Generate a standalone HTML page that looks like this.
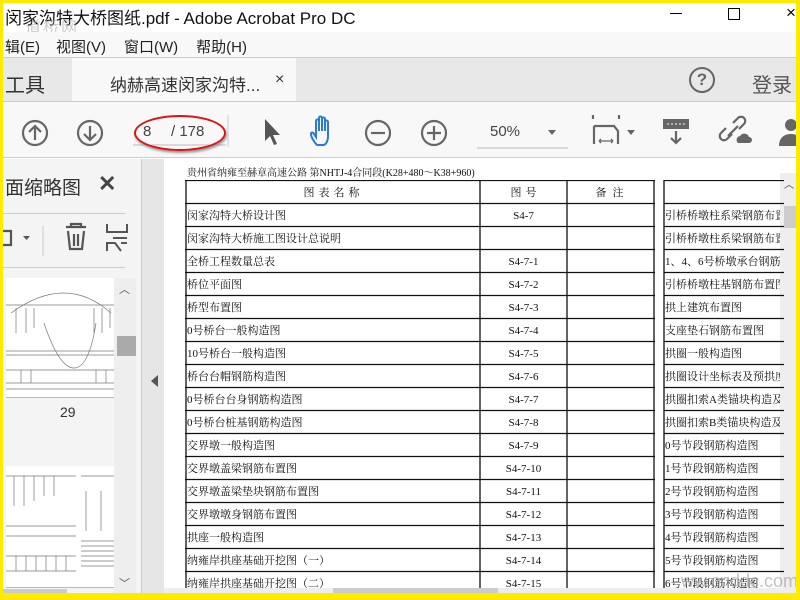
<!DOCTYPE html>
<html><head><meta charset="utf-8"><style>
*{margin:0;padding:0;box-sizing:border-box}
body{width:800px;height:600px;overflow:hidden;background:#ffeb00;position:relative;font-family:"Liberation Sans","Noto Sans CJK SC",sans-serif;color:#333}
.a{position:absolute}
.t{font-size:11px;font-family:"Liberation Serif","Noto Serif CJK SC",serif;color:#111}
</style></head><body>
<div class="a" style="left:3px;top:3px;width:793px;height:590px;background:#fff;overflow:hidden">
<div class="a" style="left:-3px;top:0;width:800px;height:29px;background:#fff"></div>
<div class="a" style="left:2px;top:1px;font-size:17px;color:#111;white-space:nowrap">闵家沟特大桥图纸.pdf - Adobe Acrobat Pro DC</div>
<div class="a" style="left:22px;top:11px;font-size:16px;color:#aaa;opacity:.6;letter-spacing:2px">道桥网</div>
<div class="a" style="left:667px;top:10px;width:12px;height:1px;background:#000"></div>
<div class="a" style="left:725px;top:5px;width:12px;height:12px;border:1px solid #000"></div>
<div class="a" style="left:783px;top:0px;font-size:17px;color:#000">×</div>
<div class="a" style="left:0;top:29px;width:793px;height:25px;background:#f8f8f8"></div>
<div class="a" style="left:2px;top:33px;font-size:15px;color:#222;white-space:nowrap">辑(E)<span style="margin-left:16px">视图(V)</span><span style="margin-left:18px">窗口(W)</span><span style="margin-left:18px">帮助(H)</span></div>
<div class="a" style="left:0;top:54px;width:793px;height:44px;background:#e8e8e8;border-top:1px solid #ccc"></div>
<div class="a" style="left:69px;top:55px;width:224px;height:44px;background:#f8f8f8"></div>
<div class="a" style="left:2px;top:66px;font-size:20px;color:#333">工具</div>
<div class="a" style="left:107px;top:68px;font-size:17px;color:#333">纳赫高速闵家沟特...</div>
<div class="a" style="left:272px;top:68px;font-size:16px;color:#333">×</div>
<div class="a" style="left:686px;top:64px;width:26px;height:26px;border:2px solid #666;border-radius:50%;text-align:center;font-size:17px;line-height:22px;color:#666;font-weight:bold">?</div>
<div class="a" style="left:749px;top:66px;font-size:20px;color:#555">登录</div>
<div class="a" style="left:0;top:98px;width:793px;height:57px;background:#f8f8f8;border-top:1px solid #ccc;border-bottom:1px solid #ccc"></div>
<svg class="a" style="left:0;top:98px" width="793" height="57" viewBox="0 0 793 57">
<g fill="none" stroke="#666" stroke-width="2.2">
<circle cx="32" cy="32" r="12"/><path d="M32 39V25M26 31l6-6 6 6"/>
<circle cx="87" cy="32" r="12"/><path d="M87 25v14M81 33l6 6 6-6"/>
<circle cx="375" cy="32" r="12"/><path d="M368 32h14"/>
<circle cx="431" cy="32" r="12"/><path d="M424 32h14M431 25v14"/>
<path d="M590 18v-4M616 18v-4M591 25h20l4 5v13M591 25v18" /><path d="M596 40h14M596 40l2-2M596 40l2 2M610 40l-2-2M610 40l-2 2" stroke-width="1.3"/>
<path d="M723 27l-5 5a4 4 0 0 0 6 6l5-5M730 22l5-5a4 4 0 0 1 6 6l-5 5M725 35l10-10"/>
</g>
<path d="M262 18v22l5-5 4 9 3-1-4-9h7z" fill="#555"/>
<path d="M314 44c-3-3-6-8-6-11 0-2 2-2 3 0l2 3V20c0-2 3-2 3 0v10V17c0-2 3-2 3 0v13V18c0-2 3-2 3 0v12V21c0-2 3-2 3 0v14c0 5-2 9-5 9z" fill="none" stroke="#2a7ad6" stroke-width="2"/>
<path d="M545 29h8l-4 5z M624 29h8l-4 5z" fill="#666"/>
<rect x="660" y="18" width="26" height="10" fill="#666"/><path d="M664 23h18" stroke="#fff" stroke-dasharray="2 2"/><path d="M673 30v12M668 37l5 5 5-5" fill="none" stroke="#666" stroke-width="2.2"/>
<path d="M735 42a4 4 0 0 1 2-7 5 5 0 0 1 9 1 3 3 0 0 1 0 6z" fill="#666"/>
<circle cx="788" cy="24" r="6" fill="#666"/><path d="M776 45c0-8 5-12 12-12s10 4 10 12z" fill="#666"/>
<path d="M225 14v32" stroke="#ccc"/>
<path d="M130 44h93M474 47h91" stroke="#bbb"/>
</svg>
<div class="a" style="left:140px;top:120px;font-size:15px;color:#444">8</div>
<div class="a" style="left:168px;top:120px;font-size:15px;color:#444">/ 178</div>
<div class="a" style="left:131px;top:112px;width:92px;height:36px;border:2px solid #d11;border-radius:50%;box-shadow:1px 2px 2px #999"></div>
<div class="a" style="left:487px;top:120px;font-size:15px;color:#444">50%</div>
<div class="a" style="left:0;top:156px;width:138px;height:437px;background:#f4f4f4"></div>
<div class="a" style="left:2px;top:170px;font-size:19px;color:#333">面缩略图</div>
<div class="a" style="left:95px;top:168px;font-size:22px;color:#444;font-weight:bold">✕</div>
<div class="a" style="left:0;top:210px;width:122px;height:1px;background:#ccc"></div>
<div class="a" style="left:0;top:264px;width:122px;height:1px;background:#ccc"></div>
<svg class="a" style="left:0;top:218px" width="130" height="40"><g fill="none" stroke="#555" stroke-width="2.2"><path d="M0 10h8v14H0"/><path d="M63 6h20M68 6V3h10v3M65 10l2 18h12l2-18M71 13v12M75 13v12"/><path d="M104 3v8h20v-8M104 30v-8h8l6 8M118 22h6M110 17h14" stroke-width="2"/></g><path d="M20 15h7l-3.5 4z" fill="#555"/><path d="M40 5v30" stroke="#ccc"/></svg>
<div class="a" style="left:3px;top:275px;width:110px;height:120px;background:#fff;border-bottom:1px solid #bbb"></div>
<svg class="a" style="left:3px;top:275px" width="110" height="120"><g fill="none" stroke="#777" stroke-width=".7"><path d="M5 35q55-40 100 0"/><path d="M38 45q15 45 30 45 15 0 22-45"/><path d="M0 27h110M0 73h110M0 77h110M0 92h110M0 105h110M0 111h110"/><path d="M10 30v25M20 30v25M28 30v20M88 30v25M96 30v25M104 30v20M15 92v13M25 92v13M90 92v13M100 92v13"/></g></svg>
<div class="a" style="left:57px;top:401px;font-size:14px;color:#333">29</div>
<div class="a" style="left:3px;top:463px;width:110px;height:122px;background:#fff;border-bottom:1px solid #bbb"></div>
<svg class="a" style="left:3px;top:463px" width="110" height="122"><g fill="none" stroke="#777" stroke-width=".7"><path d="M0 10h70M0 60h70M0 70h70M0 90h70M0 105h70M75 10h35M80 25v40M95 25v40M75 75h35M75 80h35M75 85h35M75 90h35M75 95h35M75 100h35"/><path d="M8 10v30M18 10v30M28 10v25M38 10v20M48 10v20M10 90v15M20 90v15M30 90v15M40 90v15M50 90v15M60 90v15"/></g></svg>
<div class="a" style="left:111px;top:275px;width:22px;height:318px;background:#eee"></div>
<div class="a" style="left:114px;top:333px;width:19px;height:20px;background:#aaa"></div>
<div class="a" style="left:116px;top:278px;font-size:11px;color:#555">︿</div>
<div class="a" style="left:116px;top:572px;font-size:11px;color:#555">﹀</div>
<div class="a" style="left:0;top:586px;width:64px;height:7px;background:#ccc"></div>
<div class="a" style="left:138px;top:156px;width:26px;height:437px;background:#e6e6e6;border-left:1px solid #ccc"></div>
<div class="a" style="left:148px;top:372px;width:0;height:0;border-top:6px solid transparent;border-bottom:6px solid transparent;border-right:7px solid #555"></div>
<div class="a" style="left:161px;top:156px;width:616px;height:437px;background:#fff"></div>
<div class="a t" style="left:184px;top:161px;font-size:10px">贵州省纳雍至赫章高速公路 第NHTJ-4合同段(K28+480～K38+960)</div>
<div class="a" style="left:777px;top:170px;width:16px;height:423px;background:#eee"></div>
<div class="a" style="left:781px;top:203px;width:12px;height:22px;background:#ccc"></div>
<div class="a" style="left:781px;top:173px;font-size:10px;color:#444">︿</div>
<svg class="a" style="left:182px;top:177px" width="600" height="420">
<g stroke="#111" stroke-width="1.3" fill="none">
<path d="M1 0v420M295 0v420M382 0v420M469 0v420M479 0v420M0 0.5h470M479 0.5h120"/>
<path d="M0 23.5h470M479 23.5h120M0 46.5h470M479 46.5h120M0 69.5h470M479 69.5h120M0 92.5h470M479 92.5h120M0 115.5h470M479 115.5h120M0 138.5h470M479 138.5h120M0 161.5h470M479 161.5h120M0 184.5h470M479 184.5h120M0 207.5h470M479 207.5h120M0 230.5h470M479 230.5h120M0 253.5h470M479 253.5h120M0 276.5h470M479 276.5h120M0 299.5h470M479 299.5h120M0 322.5h470M479 322.5h120M0 345.5h470M479 345.5h120M0 368.5h470M479 368.5h120M0 391.5h470M479 391.5h120"/>
</g></svg>
<div class="a t" style="left:184px;top:179px;width:600px;line-height:23px">
<div style="position:absolute;left:0;top:0;width:293px;text-align:center;letter-spacing:4px">图表名称</div>
<div style="position:absolute;left:295px;top:0;width:87px;text-align:center;letter-spacing:4px">图号</div>
<div style="position:absolute;left:382px;top:0;width:87px;text-align:center;letter-spacing:6px">备注</div>
</div>
<div class="a t" style="left:184px;top:202px;line-height:23px;white-space:nowrap">闵家沟特大桥设计图<br>闵家沟特大桥施工图设计总说明<br>全桥工程数量总表<br>桥位平面图<br>桥型布置图<br>0号桥台一般构造图<br>10号桥台一般构造图<br>桥台台帽钢筋构造图<br>0号桥台台身钢筋构造图<br>0号桥台桩基钢筋构造图<br>交界墩一般构造图<br>交界墩盖梁钢筋布置图<br>交界墩盖梁垫块钢筋布置图<br>交界墩墩身钢筋布置图<br>拱座一般构造图<br>纳雍岸拱座基础开挖图（一）<br>纳雍岸拱座基础开挖图（二）</div>
<div class="a t" style="left:477px;top:202px;width:87px;text-align:center;line-height:23px">S4-7<br>&nbsp;<br>S4-7-1<br>S4-7-2<br>S4-7-3<br>S4-7-4<br>S4-7-5<br>S4-7-6<br>S4-7-7<br>S4-7-8<br>S4-7-9<br>S4-7-10<br>S4-7-11<br>S4-7-12<br>S4-7-13<br>S4-7-14<br>S4-7-15</div>
<div class="a t" style="left:662px;top:202px;width:115px;overflow:hidden;line-height:23px;white-space:nowrap">引桥桥墩柱系梁钢筋布置图<br>引桥桥墩柱系梁钢筋布置图<br>1、4、6号桥墩承台钢筋布置<br>引桥桥墩柱基钢筋布置图<br>拱上建筑布置图<br>支座垫石钢筋布置图<br>拱圈一般构造图<br>拱圈设计坐标表及预拱度<br>拱圈扣索A类锚块构造及钢筋<br>拱圈扣索B类锚块构造及钢筋<br>0号节段钢筋构造图<br>1号节段钢筋构造图<br>2号节段钢筋构造图<br>3号节段钢筋构造图<br>4号节段钢筋构造图<br>5号节段钢筋构造图<br>6号节段钢筋构造图</div>
<div class="a" style="left:678px;top:568px;font-size:18px;color:#999;opacity:.6;font-family:'Liberation Sans',sans-serif">ww.cnddc.com</div>
<div class="a" style="left:161px;top:585px;width:616px;height:8px;background:#eee"></div>
<div class="a" style="left:330px;top:585px;width:165px;height:8px;background:#ccc"></div>
</div>
</body></html>
